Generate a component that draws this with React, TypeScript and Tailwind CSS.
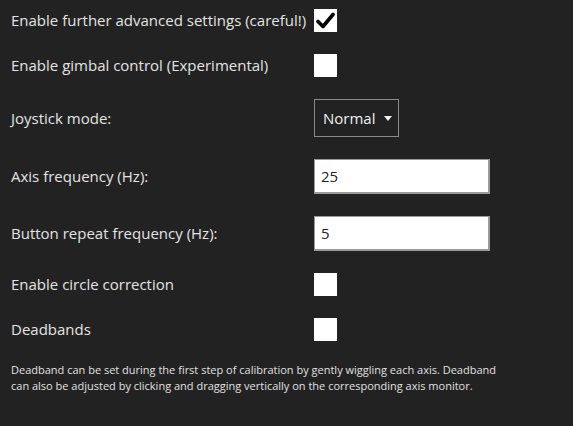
import { ReactNode } from 'react';

function Checkbox({ checked = false }: { checked?: boolean }) {
  return (
    <div className="w-[23px] h-[23px] bg-white flex items-center justify-center">
      {checked && (
        <svg width="19" height="17" viewBox="0 0 19 17">
          <path
            d="M2 9.5 L7 14.5 L17 2.5"
            fill="none"
            stroke="#000"
            strokeWidth="3.6"
            strokeLinecap="round"
            strokeLinejoin="round"
          />
        </svg>
      )}
    </div>
  );
}

function Row({ label, children }: { label: string; children: ReactNode }) {
  return (
    <div className="flex items-center">
      <div className="w-[303px] text-[15px] text-[#e4e4e4]">{label}</div>
      {children}
    </div>
  );
}

export default function App() {
  return (
    <div
      className="w-[573px] h-[426px] bg-[#222222] pl-[11px] pt-[9px] flex flex-col gap-[22px]"
      style={{ fontFamily: '"Open Sans", "Noto Sans", sans-serif' }}
    >
      <Row label="Enable further advanced settings (careful!)">
        <Checkbox checked />
      </Row>
      <Row label="Enable gimbal control (Experimental)">
        <Checkbox />
      </Row>
      <Row label="Joystick mode:">
        <div className="w-[85px] h-[38px] border border-[#8a8a8a] flex items-center pl-[8px] gap-[9px] text-[15px] text-[#f0f0f0]">
          <span>Normal</span>
          <svg width="8" height="5" viewBox="0 0 8 5">
            <path d="M0 0 L8 0 L4 5 Z" fill="#f0f0f0" />
          </svg>
        </div>
      </Row>
      <Row label="Axis frequency (Hz):">
        <div className="w-[176px] h-[35px] bg-white border-l border-t border-r-2 border-b-2 border-[#9a9a9a] flex items-center pl-[6px] text-[15px] text-[#222]">
          25
        </div>
      </Row>
      <Row label="Button repeat frequency (Hz):">
        <div className="w-[176px] h-[35px] bg-white border-l border-t border-r-2 border-b-2 border-[#9a9a9a] flex items-center pl-[6px] text-[15px] text-[#222]">
          5
        </div>
      </Row>
      <Row label="Enable circle correction">
        <Checkbox />
      </Row>
      <Row label="Deadbands">
        <Checkbox />
      </Row>
      <p className="-mt-[1px] text-[11px] leading-[16px] text-[#e0e0e0] w-[500px]">
        Deadband can be set during the first step of calibration by gently wiggling each axis. Deadband can also be adjusted by clicking and dragging vertically on the corresponding axis monitor.
      </p>
    </div>
  );
}
